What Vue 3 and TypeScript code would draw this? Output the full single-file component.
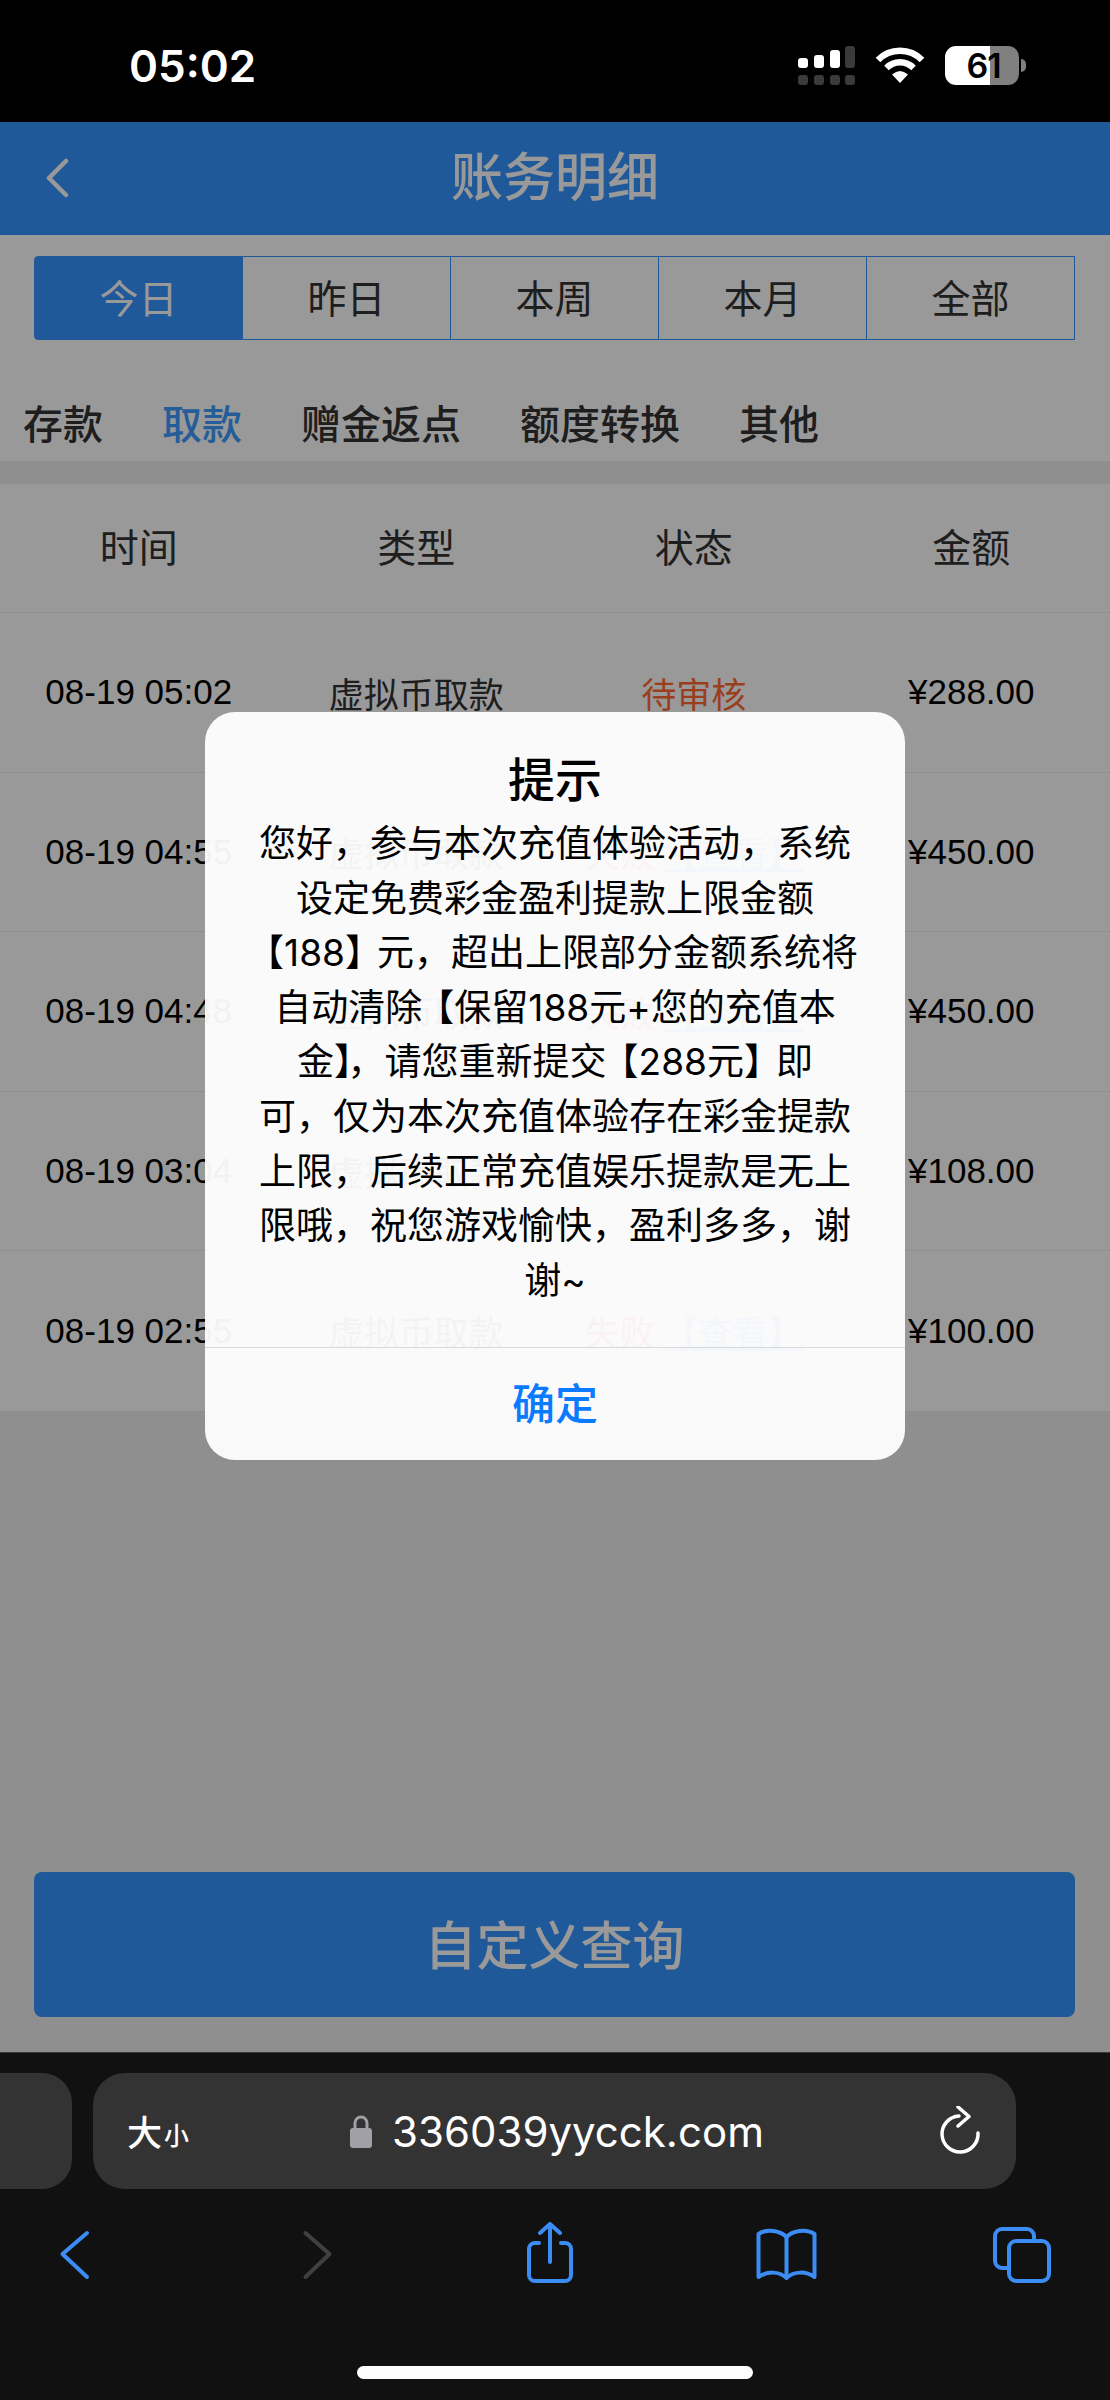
<script setup lang="ts">
import { ref } from 'vue'

interface Record {
  time: string
  type: string
  status: string
  failed: boolean
  amount: string
}

const ranges = ['今日', '昨日', '本周', '本月', '全部']
const categories = ['存款', '取款', '赠金返点', '额度转换', '其他']
const columns = ['时间', '类型', '状态', '金额']

const activeRange = ref(0)
const activeCategory = ref(1)
const showDialog = ref(true)

const records: Record[] = [
  { time: '08-19 05:02', type: '虚拟币取款', status: '待审核', failed: false, amount: '¥288.00' },
  { time: '08-19 04:55', type: '虚拟币取款', status: '失败', failed: true, amount: '¥450.00' },
  { time: '08-19 04:48', type: '虚拟币取款', status: '失败', failed: true, amount: '¥450.00' },
  { time: '08-19 03:04', type: '虚拟币取款', status: '失败', failed: true, amount: '¥108.00' },
  { time: '08-19 02:55', type: '虚拟币取款', status: '失败', failed: true, amount: '¥100.00' }
]

const lines = [
  '您好，参与本次充值体验活动，系统',
  '设定免费彩金盈利提款上限金额',
  '【188】元，超出上限部分金额系统将',
  '自动清除【保留188元+您的充值本',
  '金】，请您重新提交【288元】即',
  '可，仅为本次充值体验存在彩金提款',
  '上限，后续正常充值娱乐提款是无上',
  '限哦，祝您游戏愉快，盈利多多，谢',
  '谢~'
]

// brackets are set tighter than a full em in the dialog
const splitBrackets = (line: string) => line.split(/([【】])/).filter(s => s !== '')
</script>

<template>
  <div class="phone">
    <div class="status-bar">
      <span class="clock">05:02</span>
      <div class="status-icons">
        <svg class="signal" width="58" height="40" viewBox="0 0 58 40">
          <rect x="0" y="12" width="10" height="10" rx="3" fill="#fff" />
          <rect x="16" y="9" width="10" height="13" rx="3" fill="#fff" />
          <rect x="32" y="4" width="10" height="18" rx="3" fill="#fff" />
          <rect x="47" y="0" width="10" height="22" rx="3" fill="#3a3a3a" />
          <rect x="0" y="29" width="10" height="10" rx="3" fill="#3a3a3a" />
          <rect x="16" y="29" width="10" height="10" rx="3" fill="#3a3a3a" />
          <rect x="32" y="29" width="10" height="10" rx="3" fill="#3a3a3a" />
          <rect x="47" y="29" width="10" height="10" rx="3" fill="#3a3a3a" />
        </svg>
        <svg class="wifi" width="50" height="37" viewBox="0 0 50 37" fill="none" stroke="#fff" stroke-width="6.5">
          <path d="M3 13 A31 31 0 0 1 47 13" />
          <path d="M11.5 21 A19 19 0 0 1 38.5 21" />
          <path d="M25 36 L17 27.5 Q25 20.5 33 27.5 Z" fill="#fff" stroke="none" />
        </svg>
        <div class="battery">61</div>
      </div>
    </div>

    <div class="main">
      <header class="nav">
        <svg class="nav-back" width="24" height="40" viewBox="0 0 24 40" fill="none" stroke="#fff" stroke-width="4.5" stroke-linecap="round" stroke-linejoin="round">
          <path d="M21 3 L4 20 L21 37" />
        </svg>
        <h1>账务明细</h1>
      </header>

      <div class="ranges">
        <div
          v-for="(r, i) in ranges"
          :key="r"
          :class="{ 'range-item': true, active: i === activeRange }"
          @click="activeRange = i"
        >{{ r }}</div>
      </div>

      <div class="categories">
        <span
          v-for="(c, i) in categories"
          :key="c"
          :class="{ 'category-item': true, active: i === activeCategory }"
          @click="activeCategory = i"
        >{{ c }}</span>
      </div>

      <div class="table">
        <div class="row head">
          <div v-for="c in columns" :key="c">{{ c }}</div>
        </div>
        <div v-for="r in records" :key="r.time" class="row body">
          <div class="num">{{ r.time }}</div>
          <div>{{ r.type }}</div>
          <div v-if="r.failed" class="state"><span class="failed">{{ r.status }}</span> <span class="link">【查看】</span></div>
          <div v-else class="state pending">{{ r.status }}</div>
          <div class="num">{{ r.amount }}</div>
        </div>
      </div>

      <div class="query">
        <div class="query-btn">自定义查询</div>
      </div>

      <div v-if="showDialog" class="mask">
        <div class="dialog">
          <div class="dialog-title">提示</div>
          <div class="dialog-text">
            <div v-for="l in lines" :key="l" class="dialog-line">
              <template v-for="(part, i) in splitBrackets(l)" :key="i">
                <span v-if="part === '【'" class="open">{{ part }}</span>
                <span v-else-if="part === '】'" class="close">{{ part }}</span>
                <template v-else>{{ part }}</template>
              </template>
            </div>
          </div>
          <div class="dialog-btn" @click="showDialog = false">确定</div>
        </div>
      </div>
    </div>

    <div class="browser">
      <div class="address-row">
        <div class="prev-tab"></div>
        <div class="address">
          <span class="font-size"><b>大</b><i>小</i></span>
          <div class="host">
            <svg width="24" height="34" viewBox="0 0 24 34">
              <path d="M6 15 V9 a6 6 0 0 1 12 0 V15" fill="none" stroke="#a0a0a6" stroke-width="3" />
              <rect x="1" y="14" width="22" height="20" rx="3" fill="#a0a0a6" />
            </svg>
            <span>336039yycck.com</span>
          </div>
          <svg class="reload" width="44" height="50" viewBox="0 0 44 50" fill="none" stroke="#fff" stroke-width="3.5" stroke-linecap="round" stroke-linejoin="round">
            <path d="M21 10 A18 18 0 1 0 40 27" />
            <path d="M20 1 L31 10.5 L20 20" />
          </svg>
        </div>
      </div>
      <div class="tools">
        <svg width="80" height="64" viewBox="0 0 80 64" fill="none" stroke="#3b8cf5" stroke-width="4" stroke-linecap="round" stroke-linejoin="round">
          <path d="M52 11 L27.5 32 L52 55" />
        </svg>
        <svg width="80" height="64" viewBox="0 0 80 64" fill="none" stroke="#404040" stroke-width="4" stroke-linecap="round" stroke-linejoin="round">
          <path d="M33.5 11 L57.5 32 L33.5 55" />
        </svg>
        <svg width="80" height="64" viewBox="0 0 80 64" fill="none" stroke="#3b8cf5" stroke-width="4" stroke-linecap="round" stroke-linejoin="round">
          <path d="M42 2 V40 M32 11 L42 2 L52 11" />
          <path d="M31 21 H27 a6 6 0 0 0 -6 6 V53 a6 6 0 0 0 6 6 H57 a6 6 0 0 0 6 -6 V27 a6 6 0 0 0 -6 -6 H53" />
        </svg>
        <svg width="80" height="64" viewBox="0 0 80 64" fill="none" stroke="#3b8cf5" stroke-width="4" stroke-linecap="round" stroke-linejoin="round">
          <path d="M41.5 15 C36 9 22 6 13.5 12 V55 C22 49 34 49 41.5 56 C49 49 61 49 69.5 55 V12 C61 6 47 9 41.5 15 Z" />
          <path d="M41.5 15 V55" />
        </svg>
        <svg width="80" height="64" viewBox="0 0 80 64" fill="none" stroke="#3b8cf5" stroke-width="4" stroke-linecap="round" stroke-linejoin="round">
          <rect x="28" y="19" width="40" height="40" rx="7" />
          <path d="M26 46 H21 a7 7 0 0 1 -7 -7 V14 a7 7 0 0 1 7 -7 H46 a7 7 0 0 1 7 7 V17" />
        </svg>
      </div>
      <div class="home-bar"></div>
    </div>
  </div>
</template>

<style scoped>
.phone {
  width: 1110px;
  height: 2400px;
  display: flex;
  flex-direction: column;
  font-family: "Liberation Sans", "Noto Sans CJK SC", sans-serif;
  overflow: hidden;
}

.status-bar {
  height: 122px;
  flex: none;
  background: #000;
  display: flex;
  align-items: flex-start;
  justify-content: space-between;
  padding: 0 91px 0 129px;
  box-sizing: border-box;
  color: #fff;
}

.clock {
  font-family: Inter, sans-serif;
  font-size: 44px;
  font-weight: 600;
  line-height: 50px;
  margin-top: 41px;
}

.status-icons {
  display: flex;
  align-items: flex-start;
  margin-top: 46px;
}

.wifi {
  margin-left: 19px;
  margin-top: 1px;
}

.battery {
  position: relative;
  width: 74px;
  height: 39px;
  margin-left: 20px;
  border-radius: 11px;
  background: linear-gradient(90deg, #fff 61%, #808080 61%);
  color: #000;
  font-family: Inter, sans-serif;
  font-size: 34px;
  font-weight: 600;
  line-height: 39px;
  text-align: center;
  padding-left: 3px;
  box-sizing: border-box;
  letter-spacing: -1px;
}

.battery::after {
  content: '';
  position: absolute;
  left: 76px;
  top: 13px;
  width: 5px;
  height: 13px;
  border-radius: 0 6px 6px 0;
  background: #808080;
}

.main {
  position: relative;
  flex: 1;
  min-height: 0;
  display: flex;
  flex-direction: column;
  background: #eee;
}

.nav {
  height: 113px;
  flex: none;
  background: #3494ff;
  position: relative;
  display: flex;
  align-items: center;
  justify-content: center;
  color: #fff;
}

.nav h1 {
  margin: 0 0 10px;
  font-size: 52px;
  font-weight: 500;
  font-family: "Noto Sans CJK SC", sans-serif;
}

.nav-back {
  position: absolute;
  left: 45px;
  top: 36px;
}

.ranges {
  background: #fff;
  padding: 21px 35px 0 34px;
  display: flex;
  height: 105px;
  box-sizing: border-box;
  flex: none;
}

.range-item {
  flex: 1;
  height: 84px;
  box-sizing: border-box;
  border: 1.5px solid #3494ff;
  border-left: 0;
  padding-bottom: 4px;
  display: flex;
  align-items: center;
  justify-content: center;
  font-size: 39px;
  color: #333;
  font-family: "Noto Sans CJK SC", sans-serif;
}

.range-item:first-child {
  border-left: 1.5px solid #3494ff;
  border-radius: 4px 0 0 4px;
}

.range-item.active {
  background: #3494ff;
  color: #fff;
}

.categories {
  background: #fff;
  height: 121px;
  flex: none;
  box-sizing: border-box;
  padding: 59px 0 0 23px;
  display: flex;
  gap: 59px;
}

.category-item {
  font-size: 40px;
  line-height: 46px;
  font-weight: 500;
  color: #333;
  font-family: "Noto Sans CJK SC", sans-serif;
}

.category-item.active {
  color: #3f9bff;
}

.table {
  margin-top: 23px;
  background: #fff;
  flex: none;
}

.row {
  display: grid;
  grid-template-columns: repeat(4, 1fr);
  align-items: center;
  text-align: center;
  color: #333;
  font-family: "Noto Sans CJK SC", sans-serif;
  border-bottom: 1.5px solid #eee;
  box-sizing: border-box;
}

.row.head {
  height: 129px;
  padding-bottom: 6px;
  font-size: 39px;
}

.row.body {
  height: 159.5px;
  font-size: 35px;
}

.row.body:last-child {
  border-bottom: 0;
}

.num {
  font-family: "Liberation Sans", sans-serif;
  color: #000;
  font-size: 35px;
}

.pending {
  color: #ff6a33;
}

.failed {
  color: #f00;
}

.link {
  color: #3494ff;
  text-decoration: underline;
}

.query {
  margin-top: auto;
  padding: 0 35px 35px 34px;
}

.query-btn {
  height: 145px;
  border-radius: 8px;
  background: #3494ff;
  color: #fff;
  font-size: 52px;
  font-weight: 500;
  padding-bottom: 4px;
  box-sizing: border-box;
  font-family: "Noto Sans CJK SC", sans-serif;
  display: flex;
  align-items: center;
  justify-content: center;
}

.mask {
  position: absolute;
  inset: 0;
  background: rgba(0, 0, 0, .4);
  display: flex;
  align-items: flex-start;
  justify-content: center;
  padding-top: 590px;
  box-sizing: border-box;
}

.dialog {
  width: 700px;
  border-radius: 30px;
  background: rgba(255, 255, 255, .95);
  font-family: Inter, "Noto Sans CJK SC", sans-serif;
  color: #000;
  text-align: center;
  box-sizing: border-box;
}

.dialog-title {
  padding-top: 35px;
  height: 105px;
  box-sizing: border-box;
  font-size: 47px;
  font-weight: 500;
  line-height: 60px;
  font-family: "Noto Sans CJK SC", sans-serif;
}

.dialog-text {
  padding: 0 0 39px;
  font-size: 37px;
  line-height: 54.6px;
  border-bottom: 1.5px solid #d9d9d9;
}

.dialog-line {
  white-space: nowrap;
}

.open {
  margin-left: -5px;
}

.close {
  margin-right: -5px;
}

.dialog-btn {
  height: 112px;
  line-height: 107px;
  font-size: 43px;
  font-weight: 500;
  color: #0a7aff;
  font-family: "Noto Sans CJK SC", sans-serif;
}

.browser {
  height: 348px;
  flex: none;
  background: #111;
  border-top: 1px solid #3a3a3a;
  box-sizing: border-box;
  display: flex;
  flex-direction: column;
}

.address-row {
  display: flex;
  margin-top: 20px;
  height: 116px;
  flex: none;
}

.prev-tab {
  width: 72px;
  border-radius: 0 30px 30px 0;
  background: #333;
  flex: none;
}

.address {
  margin-left: 21px;
  width: 923px;
  border-radius: 32px;
  background: #333;
  position: relative;
  display: flex;
  align-items: center;
  justify-content: center;
  color: #fff;
}

.font-size {
  position: absolute;
  left: 34px;
  top: 38px;
  display: flex;
  align-items: flex-end;
  font-family: "Noto Sans CJK SC", sans-serif;
  font-weight: 500;
  line-height: 40px;
}

.font-size b {
  font-weight: 500;
  font-size: 35px;
}

.font-size i {
  font-style: normal;
  font-size: 25px;
  line-height: 34px;
  margin-left: 2px;
}

.host {
  display: flex;
  align-items: center;
  gap: 19px;
  font-family: Inter, sans-serif;
  font-size: 42px;
  margin-left: 4px;
}

.reload {
  position: absolute;
  left: 845px;
  top: 33px;
}

.tools {
  display: flex;
  justify-content: space-between;
  padding: 33px 49px 0 35px;
}

.home-bar {
  width: 396px;
  height: 13px;
  border-radius: 7px;
  background: #fff;
  margin: 80px auto 0;
}
</style>

<style>
html,
body {
  background: #111;
}
</style>
